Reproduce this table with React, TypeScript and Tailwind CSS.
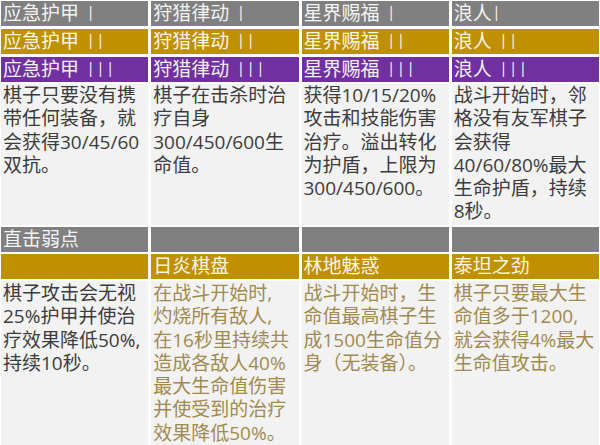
import React from "react";

const FONT = { fontFamily: '"Open Sans", "Noto Sans CJK SC", sans-serif' };

type HeadProps = { color: "gray" | "gold" | "purple"; text?: string; num?: string; gap?: boolean };

function Head({ color, text, num, gap = true }: HeadProps) {
  const bg =
    color === "gray" ? "bg-[#808080] text-[#f4f4f4]" : color === "gold" ? "bg-[#bf9000] text-[#fdf5e0]" : "bg-[#7030a0] text-[#f4f0f8]";
  return (
    <div className={`${bg} h-[25px] pl-[2px] text-[19px] leading-[25px] whitespace-nowrap flex items-center`}>
      <span>{text}</span>
      {num && (
        <span className={`text-[21px] leading-none tracking-[4.5px] font-light ${gap ? "ml-[9px]" : "ml-[2px]"}`}>{num}</span>
      )}
    </div>
  );
}

function Body({ lines, gold, pt }: { lines: string[]; gold?: boolean; pt?: string }) {
  return (
    <div
      className={`bg-[#f2f2f2] pl-[2px] text-[19px] leading-[23.3px] whitespace-nowrap ${
        gold ? "text-[#a18a4e]" : "text-[#3c3c3c]"
      } ${pt ?? "pt-0"}`}
    >
      {lines.map((l, i) => (
        <div key={i}>{l}</div>
      ))}
    </div>
  );
}

export default function App() {
  return (
    <div className="w-[600px] h-[445px] bg-white px-[1px] pt-[1px] flex flex-col overflow-hidden" style={FONT}>
      <div className="grid grid-cols-4 gap-x-[3px]">
        <Head color="gray" text="应急护甲" num="I" />
        <Head color="gray" text="狩猎律动" num="I" />
        <Head color="gray" text="星界赐福" num="I" />
        <Head color="gray" text="浪人" num="I" gap={false} />
      </div>
      <div className="grid grid-cols-4 gap-x-[3px] mt-[3px]">
        <Head color="gold" text="应急护甲" num="II" />
        <Head color="gold" text="狩猎律动" num="II" />
        <Head color="gold" text="星界赐福" num="II" />
        <Head color="gold" text="浪人" num="II" />
      </div>
      <div className="grid grid-cols-4 gap-x-[3px] mt-[3px]">
        <Head color="purple" text="应急护甲" num="III" />
        <Head color="purple" text="狩猎律动" num="III" />
        <Head color="purple" text="星界赐福" num="III" />
        <Head color="purple" text="浪人" num="III" />
      </div>
      <div className="grid grid-cols-4 gap-x-[3px] mt-[2px] h-[142px]">
        <Body lines={["棋子只要没有携", "带任何装备，就", "会获得30/45/60", "双抗。"]} />
        <Body lines={["棋子在击杀时治", "疗自身", "300/450/600生", "命值。"]} />
        <Body lines={["获得10/15/20%", "攻击和技能伤害", "治疗。溢出转化", "为护盾，上限为", "300/450/600。"]} />
        <Body lines={["战斗开始时，邻", "格没有友军棋子", "会获得", "40/60/80%最大", "生命护盾，持续", "8秒。"]} />
      </div>
      <div className="grid grid-cols-4 gap-x-[3px] mt-[2px]">
        <Head color="gray" text="直击弱点" />
        <Head color="gray" />
        <Head color="gray" />
        <Head color="gray" />
      </div>
      <div className="grid grid-cols-4 gap-x-[3px] mt-[2px]">
        <Head color="gold" />
        <Head color="gold" text="日炎棋盘" />
        <Head color="gold" text="林地魅惑" />
        <Head color="gold" text="泰坦之劲" />
      </div>
      <div className="grid grid-cols-4 gap-x-[3px] mt-[2px] flex-1">
        <Body pt="pt-[1px]" lines={["棋子攻击会无视", "25%护甲并使治", "疗效果降低50%,", "持续10秒。"]} />
        <Body
          gold
          pt="pt-[1px]"
          lines={["在战斗开始时,", "灼烧所有敌人,", "在16秒里持续共", "造成各敌人40%", "最大生命值伤害", "并使受到的治疗", "效果降低50%。"]}
        />
        <Body gold pt="pt-[1px]" lines={["战斗开始时，生", "命值最高棋子生", "成1500生命值分", "身（无装备）。"]} />
        <Body gold pt="pt-[1px]" lines={["棋子只要最大生", "命值多于1200,", "就会获得4%最大", "生命值攻击。"]} />
      </div>
    </div>
  );
}
